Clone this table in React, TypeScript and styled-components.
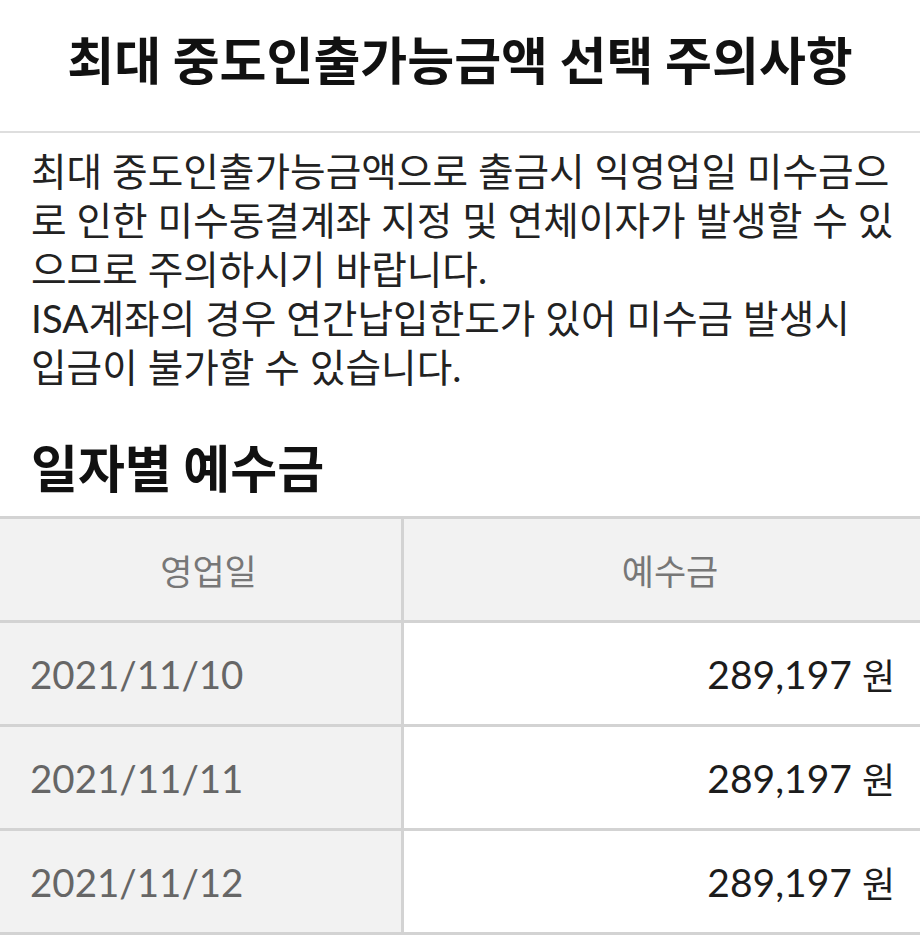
import React from "react";
import styled, { createGlobalStyle } from "styled-components";

const Global = createGlobalStyle`
  html, body { margin: 0; padding: 0; background: #ffffff; }
  body { font-family: "Lato", "Noto Sans CJK KR", sans-serif; }
`;

const Page = styled.div`
  width: 920px;
  background: #ffffff;
  display: flex;
  flex-direction: column;
`;

const TitleBar = styled.header`
  height: 133px;
  box-sizing: border-box;
  padding-bottom: 16px;
  display: flex;
  align-items: center;
  justify-content: center;
  border-bottom: 2px solid #dedede;
`;

const Title = styled.h1`
  margin: 0;
  font-family: "Noto Sans CJK KR", sans-serif;
  font-weight: 700;
  font-size: 51px;
  line-height: 60px;
  color: #111111;
  white-space: nowrap;
`;

const Notice = styled.p`
  margin: 0;
  padding: 14px 20px 0 31px;
  font-family: "Lato", "Noto Sans CJK KR", sans-serif;
  font-size: 38.7px;
  line-height: 49px;
  color: #222222;
  white-space: nowrap;
`;

const SectionTitle = styled.h2`
  margin: 0;
  padding: 44px 30px 0 31px;
  height: 80px;
  box-sizing: content-box;
  font-family: "Noto Sans CJK KR", sans-serif;
  font-weight: 700;
  font-size: 51px;
  line-height: 60px;
  color: #111111;
`;

const Table = styled.div`
  display: grid;
  grid-template-columns: 401px 1fr;
  grid-auto-rows: 101px;
  column-gap: 3px;
  row-gap: 3px;
  background: #d3d3d3;
  padding: 3px 0;
`;

const HeadCell = styled.div`
  background: #f2f2f2;
  display: flex;
  align-items: center;
  justify-content: center;
  padding-left: 16px;
  font-family: "Noto Sans CJK KR", sans-serif;
  font-size: 35px;
  color: #777777;
`;

const DateCell = styled.div`
  background: #f2f2f2;
  display: flex;
  align-items: center;
  padding-left: 30px;
  font-family: "Lato", "Noto Sans CJK KR", sans-serif;
  font-size: 38.5px;
  color: #666666;
`;

const AmountCell = styled.div`
  background: #ffffff;
  display: flex;
  align-items: center;
  justify-content: flex-end;
  padding-right: 25px;
  font-family: "Lato", "Noto Sans CJK KR", sans-serif;
  font-size: 39px;
  color: #1c1c1c;
`;

const Unit = styled.span`
  font-family: "Noto Sans CJK KR", sans-serif;
  font-size: 36px;
  margin-left: 10px;
`;

const rows = [
  { date: "2021/11/10", amount: "289,197" },
  { date: "2021/11/11", amount: "289,197" },
  { date: "2021/11/12", amount: "289,197" },
];

export default function App() {
  return (
    <Page>
      <Global />
      <TitleBar>
        <Title>최대 중도인출가능금액 선택 주의사항</Title>
      </TitleBar>
      <Notice>
        최대 중도인출가능금액으로 출금시 익영업일 미수금으
        <br />
        로 인한 미수동결계좌 지정 및 연체이자가 발생할 수 있
        <br />
        으므로 주의하시기 바랍니다.
        <br />
        ISA계좌의 경우 연간납입한도가 있어 미수금 발생시
        <br />
        입금이 불가할 수 있습니다.
      </Notice>
      <SectionTitle>일자별 예수금</SectionTitle>
      <Table>
        <HeadCell>영업일</HeadCell>
        <HeadCell>예수금</HeadCell>
        {rows.map((r) => (
          <React.Fragment key={r.date}>
            <DateCell>{r.date}</DateCell>
            <AmountCell>
              {r.amount}
              <Unit>원</Unit>
            </AmountCell>
          </React.Fragment>
        ))}
      </Table>
    </Page>
  );
}
